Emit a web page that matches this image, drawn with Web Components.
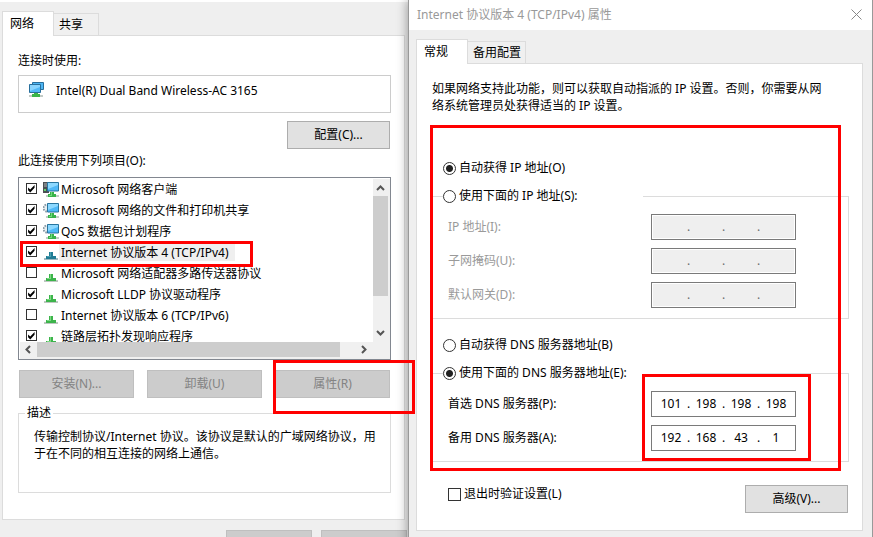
<!DOCTYPE html>
<html lang="zh-CN">
<head>
<meta charset="utf-8">
<title>Internet 协议版本 4 (TCP/IPv4) 属性</title>
<style>
  html { height: 100%; }
  body {
    margin: 0;
    height: 100%;
    overflow: hidden;
    background: #efefef;
    color: #000;
    font: 12px/16px "Noto Sans", "Noto Sans CJK SC", sans-serif;
  }
</style>
</head>
<body>
<network-desktop></network-desktop>

<script>
const define = (name, html, setup) => {
  const template = document.createElement('template');
  template.innerHTML = html;
  customElements.define(name, class extends HTMLElement {
    constructor() {
      super();
      this.attachShadow({ mode: 'open' }).append(template.content.cloneNode(true));
    }
    connectedCallback() {
      if (setup && !this.ready) { this.ready = true; setup(this, this.shadowRoot); }
    }
  });
};

/* Red marker frame laid over the content it points out */
define('red-mark', `
  <style>:host { position: absolute; z-index: 5; box-sizing: border-box; border: 3px solid #f00; pointer-events: none; }</style>`);

define('win-button', `
  <style>
    :host { display: block; position: relative; width: 103px; }
    button { display: block; box-sizing: border-box; width: 100%; height: 28px; margin: 0; padding: 0; border: 1px solid #adadad; background: #e1e1e1; color: #000; font: inherit; }
    button:disabled { background: #ccc; border-color: #bfbfbf; color: #838383; }
  </style>
  <button type="button"><slot></slot></button><slot name="mark"></slot>`,
  (el, root) => { root.querySelector('button').disabled = el.hasAttribute('disabled'); });

define('tab-bar', `
  <style>
    :host { display: block; position: relative; margin-bottom: -1px; }
    div { display: flex; align-items: flex-end; height: 25px; }
    button { box-sizing: border-box; min-width: 45px; height: 23px; margin: 0; padding: 0 4px 0 5px; border: 1px solid #dcdcdc; border-left: 0; background: #f0f0f0; color: #000; font: inherit; text-align: left; white-space: nowrap; }
    button:first-child { min-width: 52px; height: 25px; padding: 0 8px 1px 7px; border-left: 1px solid #dcdcdc; border-bottom: 0; background: #fff; }
  </style>
  <div role="tablist"></div>`,
  (el, root) => {
    const list = root.querySelector('div');
    el.getAttribute('tabs').split('|').forEach((text, i) => {
      const b = document.createElement('button');
      b.type = 'button';
      b.setAttribute('role', 'tab');
      b.setAttribute('aria-selected', String(i === 0));
      b.textContent = text;
      list.append(b);
    });
  });

define('tab-panel', `
  <style>
    :host { display: block; box-sizing: border-box; border: 1px solid #dcdcdc; background: #fff; }
  </style>
  <slot></slot>`);

define('group-box', `
  <style>
    :host { display: block; }
    fieldset { margin: 0; padding: 0; min-width: 0; border: 1px solid #dcdcdc; padding-left: var(--inset, 6px); }
    legend { box-sizing: border-box; height: 16px; padding: 0 var(--legend-pad, 2px); width: var(--legend-width, auto); }
  </style>
  <fieldset><legend><slot name="legend"></slot></legend><slot></slot></fieldset>`);

define('win-radio', `
  <style>
    :host { display: block; }
    label { display: flex; gap: 3px; align-items: flex-start; height: 16px; white-space: nowrap; }
    input { appearance: none; box-sizing: border-box; flex: none; width: 13px; height: 13px; margin: 2px 0 0; border: 1px solid #333; border-radius: 50%; background: #fff; }
    input:checked { background: radial-gradient(circle, #222 0 3px, #fff 4px); }
  </style>
  <label><input type="radio"><span><slot></slot></span></label>`,
  (el, root) => { root.querySelector('input').checked = el.hasAttribute('checked'); });

define('win-check', `
  <style>
    :host { display: block; }
    label { display: flex; gap: 3px; align-items: flex-start; white-space: nowrap; }
    input { appearance: none; box-sizing: border-box; flex: none; width: 13px; height: 13px; margin: 2px 0 0; border: 1px solid #333; background: #fff; }
  </style>
  <label><input type="checkbox"><span><slot></slot></span></label>`);

define('ip-field', `
  <style>
    :host { display: flex; align-items: center; }
    .name { flex: 0 0 203px; }
    .box { box-sizing: border-box; display: flex; align-items: center; width: 145px; height: 26px; padding: 0 3px; border: 1px solid #7a7a7a; background: #fff; }
    input { box-sizing: border-box; width: 32px; height: 20px; margin: 0; padding: 0 0 2px; border: 0; background: none; color: inherit; font: inherit; text-align: center; }
    i { flex: none; width: 3px; font-style: normal; text-align: center; }
    :host([disabled]) .name { color: #9a9a9a; }
    :host([disabled]) .box { background: #efefef; box-shadow: inset 0 0 0 1px #fff; color: #6d6d6d; }
  </style>
  <span class="name" id="name"><slot></slot></span>
  <div class="box" role="group" aria-labelledby="name"></div>`,
  (el, root) => {
    const box = root.querySelector('.box');
    const parts = (el.getAttribute('value') || '...').split('.');
    parts.forEach((part, i) => {
      if (i) {
        const dot = document.createElement('i');
        dot.textContent = '.';
        box.append(dot);
      }
      const input = document.createElement('input');
      input.type = 'text';
      input.maxLength = 3;
      input.value = part;
      input.disabled = el.hasAttribute('disabled');
      input.setAttribute('aria-label', el.textContent + ' ' + (i + 1));
      box.append(input);
    });
  });

const screen = `<path d="M3 14h13v2H3z" fill="#c3cbc6"/><path d="M7 11h4v2h2v3H5v-3h2z" fill="#38b34a"/><path d="M8 11h1v4H6v-1h2z" fill="#74d67c"/><path d="M4.500 1.500h11v8.500h-11z" fill="#4fb8f7" stroke="#28759f"/><path d="M5 2h10v2L5 8z" fill="#8cd8ff"/>`;
const pictures = {
  adapter: `<path d="M4.500 1.500h11v7h-11z" fill="#4cb5f4" stroke="#286f9c"/><path d="M1 14h14v2H1z" fill="#c3cbc6"/><path d="M6 11h4v2h2v3H4v-3h2z" fill="#3bb54a"/><path d="M1.500 3.500h11v8h-11z" fill="#52b9f7" stroke="#286f9c"/><path d="M2 4h10v2L2 10z" fill="#8ad5ff"/>`,
  client: `<path d="M0 1h6v11H0z" fill="#4a4f53"/><path d="M1 3h3M1 5h3" stroke="#aeb5b8"/><path d="M1 8h2v2H1z" fill="#62d36b"/>${screen}`,
  service: `<circle cx="4" cy="6" r="3.500" fill="#e8eef1" stroke="#8c9da8" stroke-width="2" stroke-dasharray="1.700 1"/>${screen}`,
  protocol: `<path d="M1 14h14v2H1z" fill="#bdc7c0"/><path d="M6 8h4v4h3v3H3v-3h3z" fill="#3cb44b"/><path d="M7 8h1v5H4v-1h3z" fill="#7dda83"/>`,
  active: `<path d="M1 14h14v2H1z" fill="#9fb9c1"/><path d="M6 8h4v4h3v3H3v-3h3z" fill="#217c94"/><path d="M7 8h1v5H4v-1h3z" fill="#499fb3"/>`
};
define('net-icon', `
  <style>:host { display: block; flex: none; width: 16px; height: 16px; } svg { display: block; }</style>
  <svg width="16" height="16" viewBox="0 0 16 16" aria-hidden="true"></svg>`,
  (el, root) => { root.querySelector('svg').innerHTML = pictures[el.getAttribute('kind')]; });

define('item-row', `
  <style>
    :host { display: block; position: relative; height: 21px; }
    label { display: flex; align-items: flex-start; height: 21px; padding-left: 7px; white-space: nowrap; }
    input { appearance: none; box-sizing: border-box; flex: none; width: 11px; height: 11px; margin: 4px 6px 0 0; border: 1px solid #333; background: #fff; }
    input:checked::before { content: ""; display: block; width: 9px; height: 9px; background: #000; clip-path: polygon(12% 40%, 36% 62%, 84% 10%, 84% 42%, 36% 94%, 12% 70%); }
    net-icon { margin-top: 2px; }
    :host([low]) net-icon { margin-top: 3px; }
    span { height: 19px; line-height: 21px; padding: 0 6px 0 2px; }
    :host([selected]) span { background: #efefef; }
  </style>
  <label><input type="checkbox"><net-icon></net-icon><span><slot></slot></span></label><slot name="mark"></slot>`,
  (el, root) => {
    root.querySelector('input').checked = el.hasAttribute('checked');
    const old = root.querySelector('net-icon');
    const icon = document.createElement('net-icon');
    icon.setAttribute('kind', el.getAttribute('kind'));
    old.replaceWith(icon);
  });

define('item-list', `
  <style>
    :host { display: grid; grid-template: 164px 17px / minmax(0, 1fr) 17px; border: 1px solid #828790; background: #fff; }
    .rows { overflow: hidden; padding-top: 1px; }
    .v, .h, .corner { background: #f0f0f0; }
    .v { display: flex; flex-direction: column; margin-top: 1px; }
    .h { display: flex; margin-left: 1px; }
    .v b { width: 15px; height: 100px; background: #cdcdcd; }
    .h b { flex: 1; background: #cdcdcd; height: 15px; }
    svg { display: block; flex: none; fill: none; stroke: #555; stroke-width: 2; }
    .v svg:last-child { margin-top: auto; }
    .h svg:last-child { margin-left: 16px; }
  </style>
  <div class="rows"><slot></slot></div>
  <div class="v"><svg width="15" height="17"><path d="M4 11l3.500-3.500L11 11"/></svg><b></b><svg width="15" height="17"><path d="M4 6l3.500 3.500L11 6"/></svg></div>
  <div class="h"><svg width="17" height="15"><path d="M10 4L6.500 7.500L10 11"/></svg><b></b><svg width="17" height="15"><path d="M6 4l3.500 3.500L6 11"/></svg></div>
  <div class="corner"></div>`);

define('adapter-window', `
  <style>
    :host { display: block; min-width: 0; box-sizing: border-box; border-top: 2px solid #fff; padding: 9px 3px 0 2px; background: #efefef; }
    tab-panel { padding: 17px 13px 26px 15px; }
    .device { display: flex; gap: 12px; box-sizing: border-box; height: 38px; margin: 6px 0 8px; padding: 5px 0 0 9px; border: 1px solid #ccc; }
    .device span { padding-top: 2px; }
    .config { margin: 0 1px 4px auto; }
    item-list { margin-top: 8px; }
    .actions { display: grid; grid-template-columns: repeat(3, 1fr); gap: 13px; margin: 10px 1px 7px; }
    .actions win-button { width: auto; }
    p { margin: 0; padding: 7px 9px 30px; line-height: 17px; }
    .footer { display: flex; justify-content: flex-end; gap: 9px; margin: 10px -2px 0 0; }
    .footer win-button { width: 86px; }
  </style>
  <tab-bar tabs="网络|共享"></tab-bar>
  <tab-panel>
    <div>连接时使用:</div>
    <div class="device"><net-icon kind="adapter"></net-icon><span>Intel(R) Dual Band Wireless-AC 3165</span></div>
    <win-button class="config">配置(C)...</win-button>
    <div>此连接使用下列项目(O):</div>
    <item-list>
      <item-row kind="client" checked>Microsoft 网络客户端</item-row>
      <item-row kind="service" checked>Microsoft 网络的文件和打印机共享</item-row>
      <item-row kind="service" checked>QoS 数据包计划程序</item-row>
      <item-row kind="active" checked selected>Internet 协议版本 4 (TCP/IPv4)<red-mark slot="mark" style="top:-1px;left:1px;width:233px;height:26px"></red-mark></item-row>
      <item-row kind="protocol" low>Microsoft 网络适配器多路传送器协议</item-row>
      <item-row kind="protocol" low checked>Microsoft LLDP 协议驱动程序</item-row>
      <item-row kind="protocol" low>Internet 协议版本 6 (TCP/IPv6)</item-row>
      <item-row kind="protocol" low checked>链路层拓扑发现响应程序</item-row>
    </item-list>
    <div class="actions">
      <win-button disabled>安装(N)...</win-button>
      <win-button disabled>卸载(U)</win-button>
      <win-button disabled>属性(R)<red-mark slot="mark" style="top:-10px;right:-25px;bottom:-16px;left:-2px"></red-mark></win-button>
    </div>
    <group-box>
      <span slot="legend">描述</span>
      <p>传输控制协议/Internet 协议。该协议是默认的广域网络协议，用于在不同的相互连接的网络上通信。</p>
    </group-box>
  </tab-panel>
  <div class="footer"><win-button disabled></win-button><win-button disabled></win-button></div>`);

define('ipv4-dialog', `
  <style>
    :host { display: block; min-width: 0; position: relative; z-index: 1; box-sizing: border-box; border: solid #999; border-width: 0 1px; background: #efefef; box-shadow: -1px 0 10px rgba(0, 0, 0, .35); }
    header { display: flex; align-items: center; justify-content: space-between; height: 30px; padding: 0 9px 0 8px; background: #fff; color: #999; }
    h1 { margin: 0; font: inherit; }
    header button { width: 13px; height: 13px; margin: 0 0 2px; padding: 0; border: 0; background: none; }
    svg { display: block; }
    main { padding: 9px 9px 0 7px; }
    tab-panel { padding: 16px 13px 17px 15px; }
    p { margin: 0 19px 46px 0; line-height: 17px; }
    .options { position: relative; }
    .auto { margin: 0 11px 12px; }
    .dns { margin-top: 18px; }
    group-box { --inset: 10px; --legend-pad: 0; --legend-width: 200px; }
    group-box.wide { --legend-width: 247px; }
    .fields { display: grid; gap: 8px; position: relative; padding: 10px 0 10px 5px; }
    .bottom { display: flex; align-items: flex-start; justify-content: space-between; margin: 23px 1px 0 16px; }
    win-check { padding-top: 1px; }
  </style>
  <header>
    <h1>Internet 协议版本 4 (TCP/IPv4) 属性</h1>
    <button type="button" aria-label="关闭"><svg width="13" height="13"><path d="M1.500 1.500l10 10M11.500 1.500l-10 10" stroke="#888" fill="none"/></svg></button>
  </header>
  <main>
    <tab-bar tabs="常规|备用配置"></tab-bar>
    <tab-panel>
      <p>如果网络支持此功能，则可以获取自动指派的 IP 设置。否则，你需要从网络系统管理员处获得适当的 IP 设置。</p>
      <div class="options">
        <win-radio class="auto" checked>自动获得 IP 地址(O)</win-radio>
        <group-box>
          <win-radio slot="legend">使用下面的 IP 地址(S):</win-radio>
          <div class="fields">
            <ip-field disabled>IP 地址(I):</ip-field>
            <ip-field disabled>子网掩码(U):</ip-field>
            <ip-field disabled>默认网关(D):</ip-field>
          </div>
        </group-box>
        <win-radio class="auto dns">自动获得 DNS 服务器地址(B)</win-radio>
        <group-box class="wide">
          <win-radio slot="legend" checked>使用下面的 DNS 服务器地址(E):</win-radio>
          <div class="fields">
            <ip-field value="101.198.198.198">首选 DNS 服务器(P):</ip-field>
            <ip-field value="192.168.43.1">备用 DNS 服务器(A):</ip-field>
            <red-mark style="top:-7px;bottom:0;left:199px;width:169px"></red-mark>
          </div>
        </group-box>
        <red-mark style="top:-35px;right:8px;bottom:-9px;left:-2px"></red-mark>
      </div>
      <div class="bottom">
        <win-check>退出时验证设置(L)</win-check>
        <win-button>高级(V)...</win-button>
      </div>
    </tab-panel>
  </main>`);

define('network-desktop', `
  <style>
    :host { display: grid; grid-template-columns: minmax(0, 408fr) minmax(0, 465fr); min-height: 100%; }
  </style>
  <adapter-window></adapter-window>
  <ipv4-dialog></ipv4-dialog>`);
</script>
</body>
</html>
